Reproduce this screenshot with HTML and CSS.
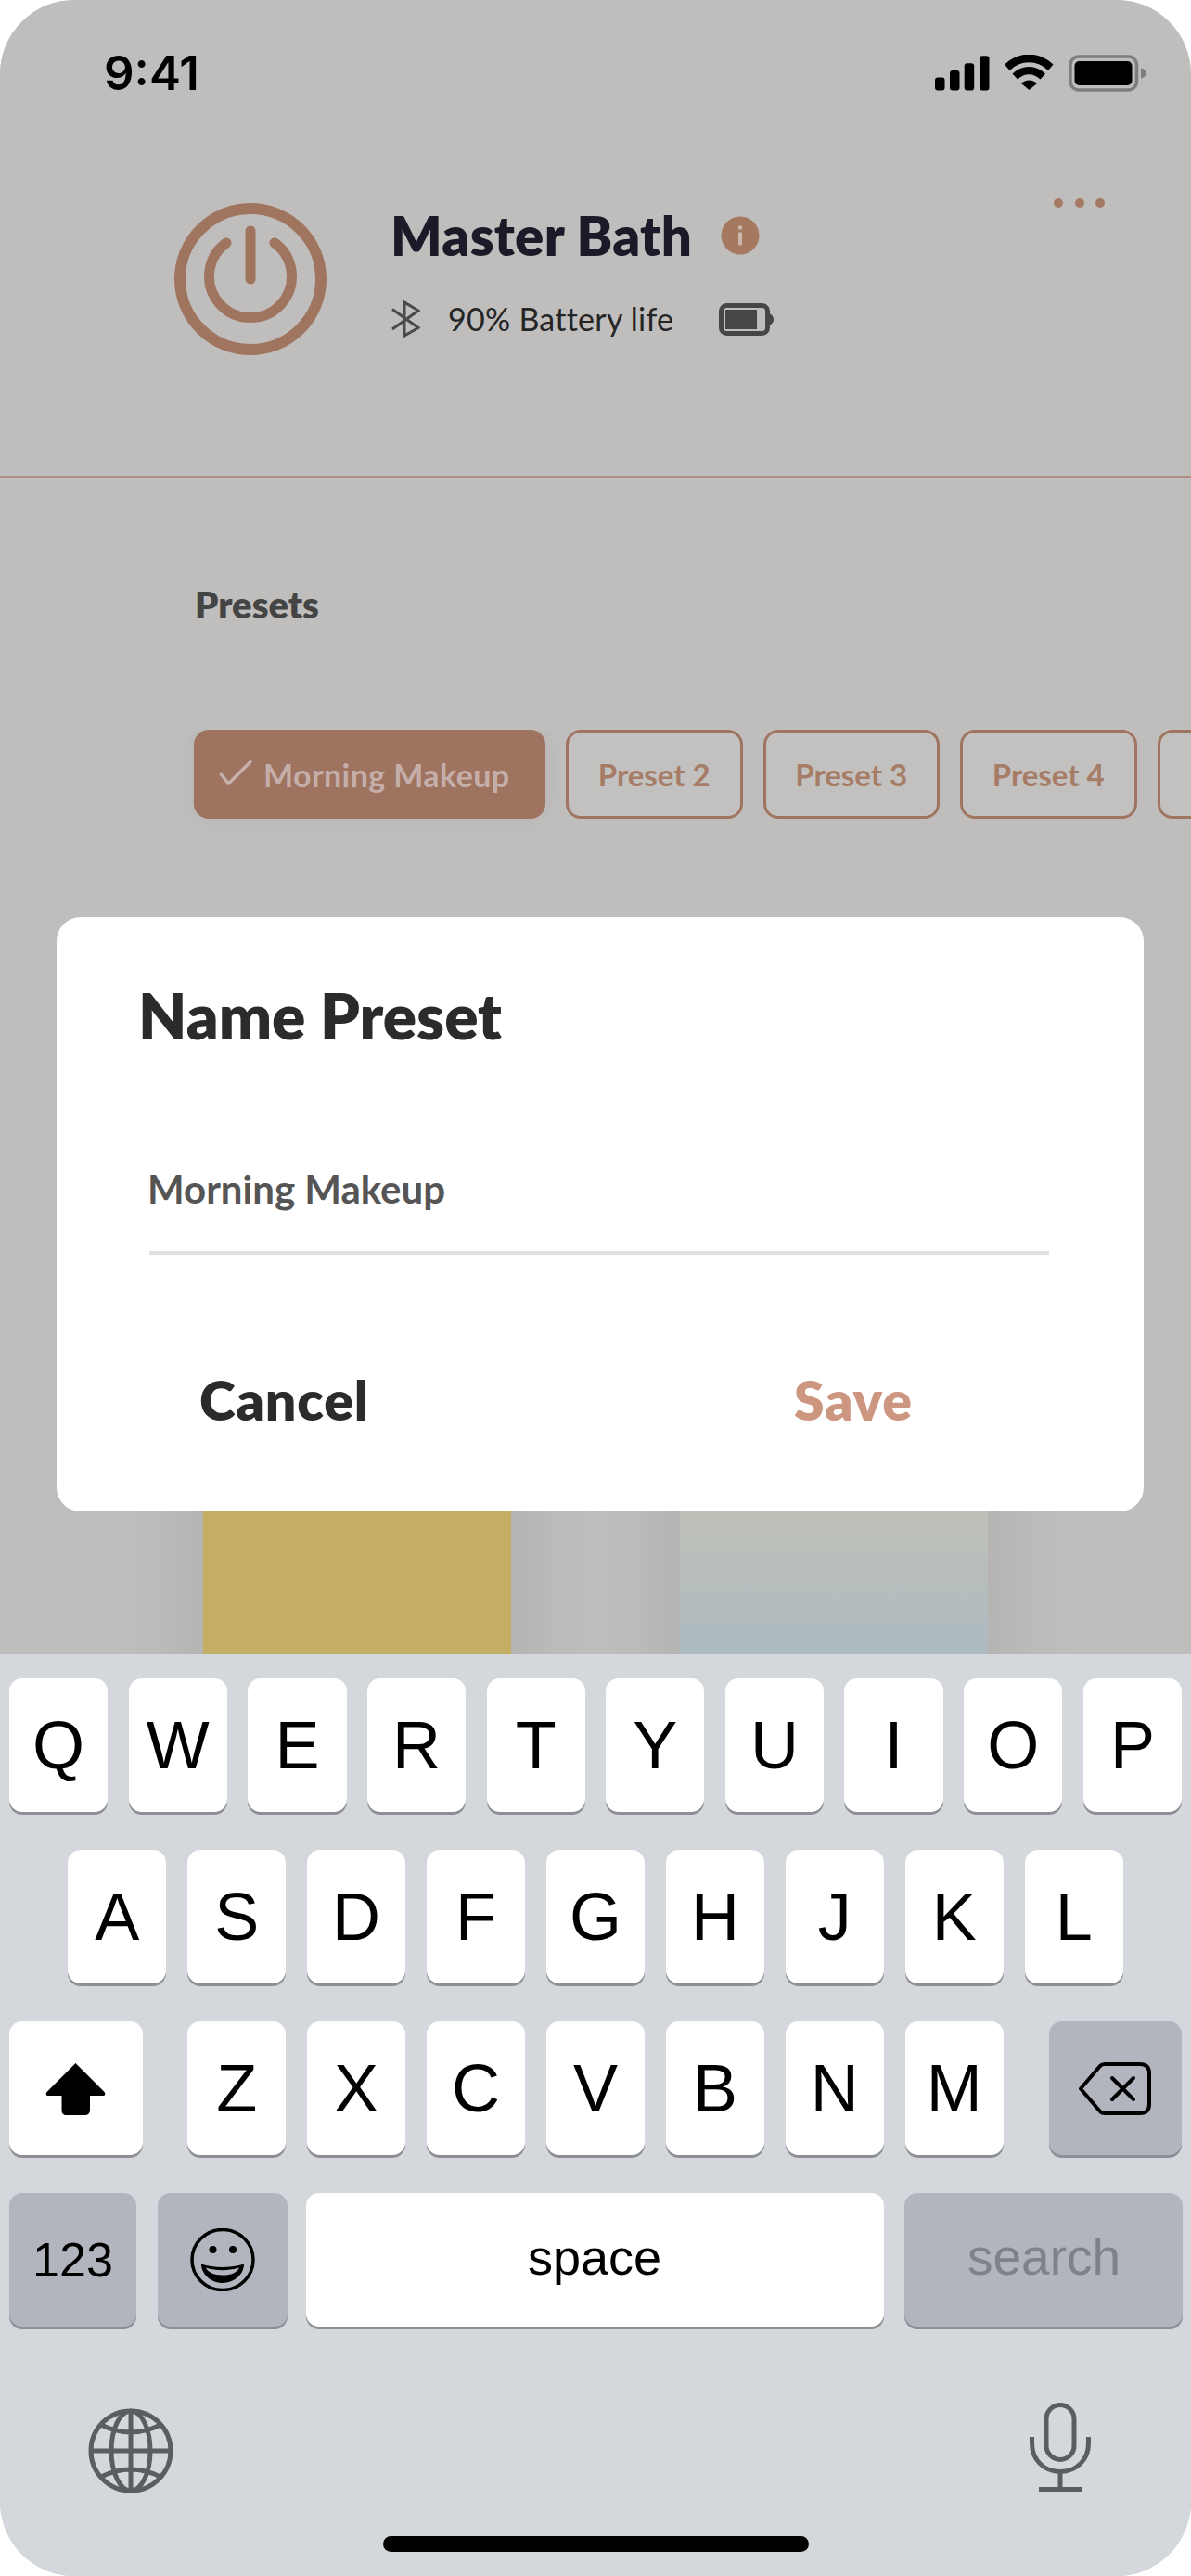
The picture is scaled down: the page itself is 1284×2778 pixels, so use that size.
FILE: index.html
```html
<!DOCTYPE html>
<html lang="en">
<head>
<meta charset="utf-8">
<title>Name Preset</title>
<link rel="stylesheet" href="styles.css">
</head>
<body>
<div class="screen">
  <div class="backdrop">
    <div class="status">
      <span class="time">9:41</span>
      <div class="status-icons">
        <svg class="ic-signal" viewBox="0 0 59 38"><rect x="0" y="23.5" width="10.5" height="14" rx="3"/><rect x="16" y="16" width="10.5" height="21.5" rx="3"/><rect x="31.7" y="8.3" width="10.5" height="29.2" rx="3"/><rect x="48" y="0.3" width="10.5" height="37.2" rx="3"/></svg>
        <svg class="ic-wifi" viewBox="0 0 53 38"><path d="M0 10.5A37 37 0 0 1 52.5 10.5L47 17A29 29 0 0 0 5.5 17Z"/><path d="M8.5 20.5A25 25 0 0 1 44 20.5L38.5 26.5A17 17 0 0 0 14 26.5Z"/><path d="M18 31A12 12 0 0 1 35 31L26.5 38Z"/></svg>
        <svg class="ic-batt" viewBox="0 0 84 40"><rect x="2" y="2" width="71.5" height="36" rx="9" fill="none" stroke="#7f7e7c" stroke-width="3.5"/><rect x="6.5" y="7" width="62" height="26" rx="5" fill="#000"/><path d="M78 14.5C81 15 83.5 17 83.5 20S81 25 78 25.500Z" fill="#7f7e7c"/></svg>
      </div>
    </div>

    <div class="device">
      <svg class="ic-power" viewBox="0 0 164 164" fill="none" stroke="#a07560" stroke-linecap="round">
        <circle cx="82" cy="82" r="76" stroke-width="12"/>
        <path d="M56 43A44.500 44.500 0 1 0 108 43" stroke-width="11"/>
        <path d="M82 30V82" stroke-width="11"/>
      </svg>
      <div class="device-info">
        <div class="device-title">
          <span class="device-name">Master Bath</span>
          <svg class="ic-info" viewBox="0 0 42 42"><circle cx="21" cy="21" r="20.500" fill="#a5795f"/><circle cx="21" cy="12.500" r="2.300" fill="#cdb7ad"/><rect x="19" y="17.500" width="4" height="14" rx="1" fill="#cdb7ad"/></svg>
        </div>
        <div class="device-sub">
          <svg class="ic-bt" viewBox="0 0 31 40" fill="none" stroke="#4a4a4a" stroke-width="3"><path d="M1 9.500L29 29.500L14 38V2L29 11L1 31"/></svg>
          <span class="battery-label">90% Battery life</span>
          <svg class="ic-mini-batt" viewBox="0 0 59 35"><rect x="2.500" y="2.500" width="50" height="30" rx="6" fill="none" stroke="#464646" stroke-width="5"/><rect x="7" y="7" width="34" height="21" fill="#464646"/><path d="M54 11C57 12 59 14.500 59 17.500S57 23 54 24Z" fill="#464646"/></svg>
        </div>
      </div>
      <div class="dots"><i></i><i></i><i></i></div>
    </div>

    <div class="presets">
      <div class="presets-label">Presets</div>
      <div class="chips">
        <div class="chip chip-active">
          <svg class="ic-check" viewBox="0 0 37 28" fill="none" stroke="#c7b1ad" stroke-width="3.500"><path d="M1.500 15L10.500 26L35 1.500"/></svg>
          <span>Morning Makeup</span>
        </div>
        <div class="chip">Preset 2</div>
        <div class="chip">Preset 3</div>
        <div class="chip">Preset 4</div>
        <div class="chip">Preset 5</div>
      </div>
    </div>

    <div class="swatches">
      <div class="swatch swatch-yellow"></div>
      <div class="swatch swatch-blue"></div>
    </div>
  </div>

  <div class="dialog">
    <div class="dialog-title">Name Preset</div>
    <div class="dialog-field">Morning Makeup</div>
    <div class="dialog-actions">
      <span class="action-cancel">Cancel</span>
      <span class="action-save">Save</span>
    </div>
  </div>

  <div class="keyboard">
    <div class="row row-top">
      <div class="key">Q</div><div class="key">W</div><div class="key">E</div><div class="key">R</div><div class="key">T</div><div class="key">Y</div><div class="key">U</div><div class="key">I</div><div class="key">O</div><div class="key">P</div>
    </div>
    <div class="row row-mid">
      <div class="key">A</div><div class="key">S</div><div class="key">D</div><div class="key">F</div><div class="key">G</div><div class="key">H</div><div class="key">J</div><div class="key">K</div><div class="key">L</div>
    </div>
    <div class="row row-third">
      <div class="key key-wide">
        <svg class="ic-shift" viewBox="0 0 65 57"><path d="M32.500 1L63.500 32C65 34 64.500 36 62 36H48V51C48 55 46 57 42 57H23C19 57 17.500 55 17.500 51V36H3C.5 36 0 34 1.500 32Z"/></svg>
      </div>
      <div class="letters">
        <div class="key">Z</div><div class="key">X</div><div class="key">C</div><div class="key">V</div><div class="key">B</div><div class="key">N</div><div class="key">M</div>
      </div>
      <div class="key key-wide key-gray">
        <svg class="ic-delete" viewBox="0 0 78 57" fill="none" stroke="#000" stroke-width="4" stroke-linejoin="round" stroke-linecap="round"><path d="M28 2H66C72.500 2 76 5.500 76 12V45C76 51.500 72.500 55 66 55H28C26 55 24.500 54.500 23 53L2 28.500L23 4C24.500 2.500 26 2 28 2Z"/><path d="M36 17L59 40M59 17L36 40"/></svg>
      </div>
    </div>
    <div class="row row-bottom">
      <div class="key key-gray key-num">123</div>
      <div class="key key-gray key-emoji">
        <svg class="ic-emoji" viewBox="0 0 70 68"><ellipse cx="35" cy="34" rx="33" ry="32.500" fill="none" stroke="#000" stroke-width="3.500"/><circle cx="24.500" cy="23" r="4"/><circle cx="46" cy="23" r="4"/><path d="M12 38.500C25 43 45 43 58 38.500C58 50 47 59 35 59S12 50 12 38.500Z"/><path d="M17 42.500C28 46 42 46 53 42.500C51 47 45 50.500 35 50.500S19 47 17 42.500Z" fill="#b2b5be"/></svg>
      </div>
      <div class="key key-space">space</div>
      <div class="key key-gray key-search">search</div>
    </div>
    <div class="kb-tools">
      <svg class="ic-globe" viewBox="0 0 92 92" fill="none" stroke="#5b5d63" stroke-width="5"><circle cx="46" cy="46" r="43"/><ellipse cx="46" cy="46" rx="21" ry="43"/><path d="M46 3V89M3 46H89M14 18Q46 34 78 18M14 74Q46 58 78 74"/></svg>
      <svg class="ic-mic" viewBox="0 0 66 96" fill="none" stroke="#5b5d63" stroke-width="5"><rect x="18" y="2.500" width="30" height="59" rx="15"/><path d="M2.500 37V44C2.500 61 15 74.500 33 74.500S63.500 61 63.500 44V37"/><path d="M33 74.500V92"/><path d="M10 93.500H56" stroke-width="5"/></svg>
    </div>
    <div class="home-bar"></div>
  </div>
</div>
</body>
</html>
```

FILE: styles.css
```css
* { box-sizing: border-box; }
html, body { margin: 0; padding: 0; background: #fff; }
body { width: 1284px; height: 2778px; overflow: hidden; font-family: "Lato", "Liberation Sans", sans-serif; }

.screen {
  position: relative;
  width: 1284px;
  height: 2778px;
  border-radius: 80px;
  overflow: hidden;
  background: #d4d7dc;
  display: flex;
  flex-direction: column;
}

.backdrop {
  height: 1784px;
  flex: none;
  overflow: hidden;
  background: #bfbebc;
}

/* status bar */
.status {
  height: 130px;
  padding: 59px 48px 0 112px;
  display: flex;
  justify-content: space-between;
  align-items: flex-start;
}
.time {
  font-family: "Inter", "Liberation Sans", sans-serif;
  font-size: 51px;
  line-height: 40px;
  font-weight: 600;
  color: #000;
  letter-spacing: 0;
}
.status-icons { display: flex; align-items: flex-start; }
.ic-signal { width: 59px; height: 38px; margin-top: 1px; }
.ic-wifi { width: 53px; height: 38px; margin-left: 16px; }
.ic-batt { width: 84px; height: 40px; margin-left: 16px; }

/* device header */
.device {
  height: 385px;
  padding: 84px 93px 0 188px;
  display: flex;
  align-items: flex-start;
  border-bottom: 2px solid #b08e86;
}
.ic-power { width: 164px; height: 164px; margin-top: 5px; flex: none; }
.device-info { margin-left: 71px; }
.device-title { display: flex; align-items: center; height: 60px; margin-top: 10px; }
.device-name { margin-left: -2px; font-size: 58px; line-height: 60px; font-weight: 800; letter-spacing: 0.3px; color: #1a1a28; }
.ic-info { width: 42px; height: 42px; margin-left: 31px; }
.device-sub { display: flex; align-items: center; height: 40px; margin-top: 40px; margin-left: -1px; }
.ic-bt { width: 31px; height: 40px; }
.battery-label { margin-left: 30px; font-size: 34px; line-height: 40px; color: #252525; letter-spacing: 0.25px; }
.ic-mini-batt { width: 59px; height: 35px; margin-left: 49px; }
.dots { margin-left: auto; display: flex; gap: 12.500px; }
.dots i { display: block; width: 10px; height: 10px; border-radius: 50%; background: #a57a64; }

/* presets */
.presets { padding: 114px 0 0 0; }
.presets-label { padding-left: 210px; font-size: 40px; line-height: 46px; font-weight: 800; color: #444; }
.chips {
  margin-top: 112px;
  padding-left: 209px;
  display: flex;
  gap: 22px;
  width: 1284px;
  overflow: hidden;
  padding-bottom: 30px;
}
.chip {
  flex: none;
  width: 190.500px;
  height: 96px;
  border: 3px solid #a07560;
  border-radius: 16px;
  background: #c2c1c0;
  color: #a67c66;
  font-size: 33px;
  font-weight: 700;
  display: flex;
  align-items: center;
  justify-content: center;
}
.chip-active {
  width: 379px;
  padding-left: 24px;
  justify-content: flex-start;
  background: #9e7360;
  border-color: #9e7360;
  color: #c5aeaa;
  font-size: 34px;
  letter-spacing: 0.4px;
  box-shadow: 0 0 24px rgba(0, 0, 0, 0.05);
}
.ic-check { width: 37px; height: 28px; margin-right: 11px; margin-top: -4px; flex: none; }

/* blocked-out swatches under the dialog */
.swatches {
  padding-left: 219px;
  display: flex;
  gap: 182px;
  margin-top: 169px;
}
.swatch { flex: none; width: 332px; height: 900px; box-shadow: 0 0 100px rgba(0, 0, 0, 0.1); }
.swatch-yellow { background: #c4ae64; }
.swatch-blue { background: linear-gradient(#bfc0b8 0, #bfc0b8 549px, #adbac1 703px); }

/* dialog */
.dialog {
  position: absolute;
  left: 61px;
  top: 989px;
  width: 1172px;
  height: 641px;
  background: #fff;
  border-radius: 26px;
  padding: 68px 102px 0 88px;
}
.dialog-title { font-size: 67.500px; line-height: 76px; font-weight: 800; color: #2b2b2b; }
.dialog-field {
  margin: 124px 0 0 12px;
  padding-bottom: 42px;
  border-bottom: 4px solid #e0e0e2;
  font-size: 42px;
  line-height: 50px;
  font-weight: 700;
  text-indent: -2px;
  color: #555;
}
.dialog-actions { display: flex; margin: 122px 0 0 66px; font-size: 59px; line-height: 70px; font-weight: 800; letter-spacing: 0.8px; }
.action-cancel { color: #2b2b2b; width: 641px; }
.action-save { color: #cc9680; }

/* keyboard */
.keyboard { flex: 1; padding-top: 26px; background: #d4d7dc; position: relative; }
.row { display: flex; height: 144px; margin-bottom: 41px; }
.row-top { padding: 0 10px; gap: 22.400px; }
.row-mid { padding: 0 73px; gap: 22.500px; }
.row-third { padding: 0 10px; justify-content: space-between; }
.letters { display: flex; gap: 22.600px; width: 880px; }
.row-bottom { padding: 0 10px; }

.key {
  flex: 1;
  height: 144px;
  background: #fff;
  border-radius: 14px;
  box-shadow: 0 3px 0 #8e8f94;
  color: #000;
  font-family: "Liberation Sans", Arial, sans-serif;
  font-size: 72px;
  display: flex;
  align-items: center;
  justify-content: center;
}
.key-wide { flex: none; width: 143.500px; }
.key-gray { background: #b2b5be; }
.key-num { flex: none; width: 137px; font-size: 52px; margin-right: 23px; }
.key-emoji { flex: none; width: 139.500px; margin-right: 20px; }
.key-space { flex: none; width: 623px; font-size: 54px; padding-bottom: 7px; margin-right: 22px; }
.key-search { flex: none; width: 300px; font-size: 55px; padding-bottom: 7px; padding-left: 2px; color: #7f828a; }

.ic-shift { width: 65px; height: 57px; }
.ic-delete { width: 78px; height: 57px; }
.ic-emoji { width: 70px; height: 68px; }

.kb-tools {
  display: flex;
  justify-content: space-between;
  padding: 41px 108px 0 95px;
  height: 96px;
}
.ic-globe { width: 92px; height: 92px; margin-top: 6px; }
.ic-mic { width: 66px; height: 96px; }

.home-bar {
  position: absolute;
  left: 413px;
  bottom: 26px;
  width: 459px;
  height: 17px;
  border-radius: 9px;
  background: #000;
}
```
